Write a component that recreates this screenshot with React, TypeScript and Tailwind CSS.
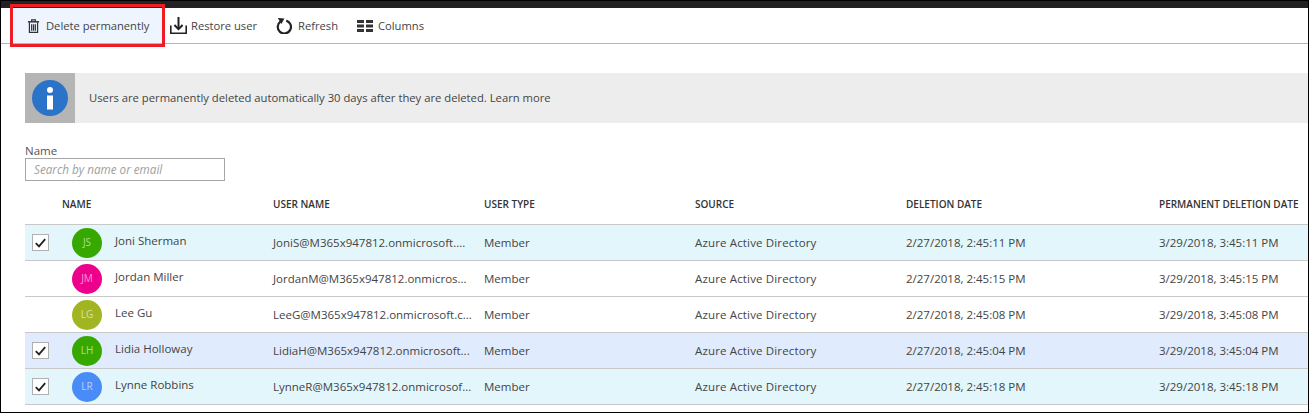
const font = "[font-family:'Open_Sans','Noto_Sans',sans-serif]";

const TrashIcon = () => (
  <svg width="13" height="14" viewBox="0 0 14 15" fill="none" stroke="#333" strokeWidth="1.3">
    <path d="M1 3h12" strokeWidth="1.6" />
    <path d="M5 2.8V1h4v1.8" />
    <path d="M2.6 3.5v10.8h8.8V3.5" />
    <path d="M5 5.5v7M7 5.5v7M9 5.5v7" />
  </svg>
);
const RestoreIcon = () => (
  <svg width="17" height="17" viewBox="0 0 17 17" fill="none" stroke="#222" strokeWidth="1.6">
    <path d="M.8 8.5v7.7h15.4V8.5" />
    <path d="M8.5 0v11.8" strokeWidth="2" />
    <path d="M4.4 8l4.1 4.1L12.6 8" strokeWidth="2" />
  </svg>
);
const RefreshIcon = () => (
  <svg width="16" height="17" viewBox="0 0 16 17" fill="none">
    <path d="M4.4 4.6A6.6 6.6 0 1 0 10.3 3.6" stroke="#222" strokeWidth="2.2" />
    <path d="M1.8 1l6.6.5-3 5.6z" fill="#222" />
  </svg>
);
const ColumnsIcon = () => (
  <svg width="16" height="12" viewBox="0 0 16 12" fill="#333">
    <path d="M0 0h7v3H0zM9 0h7v3H9zM0 4.5h7v3H0zM9 4.5h7v3H9zM0 9h7v3H0zM9 9h7v3H9z" />
  </svg>
);
const Check = () => (
  <svg width="11" height="10" viewBox="0 0 11 10" fill="none" stroke="#222" strokeWidth="1.8">
    <path d="M.8 5.2l3.2 3.2L10.2 1.2" />
  </svg>
);

const rows = [
  { check: true, bg: "bg-[#e3f6fb]", av: "bg-[#36a800]", i: "JS", name: "Joni Sherman", user: "JoniS@M365x947812.onmicrosoft....", del: "2/27/2018, 2:45:11 PM", perm: "3/29/2018, 3:45:11 PM" },
  { check: false, bg: "bg-white", av: "bg-[#ec008c]", i: "JM", name: "Jordan Miller", user: "JordanM@M365x947812.onmicros...", del: "2/27/2018, 2:45:15 PM", perm: "3/29/2018, 3:45:15 PM" },
  { check: false, bg: "bg-white", av: "bg-[#a1b523]", i: "LG", name: "Lee Gu", user: "LeeG@M365x947812.onmicrosoft.c...", del: "2/27/2018, 2:45:08 PM", perm: "3/29/2018, 3:45:08 PM" },
  { check: true, bg: "bg-[#e0ecfd]", av: "bg-[#36a800]", i: "LH", name: "Lidia Holloway", user: "LidiaH@M365x947812.onmicrosoft...", del: "2/27/2018, 2:45:04 PM", perm: "3/29/2018, 3:45:04 PM" },
  { check: true, bg: "bg-[#e3f6fb]", av: "bg-[#4a8cf7]", i: "LR", name: "Lynne Robbins", user: "LynneR@M365x947812.onmicrosof...", del: "2/27/2018, 2:45:18 PM", perm: "3/29/2018, 3:45:18 PM" },
];

const Head = ({ w, children }: { w: string; children: string }) => (
  <div className={`${w} shrink-0 whitespace-nowrap`}>{children}</div>
);

export default function App() {
  return (
    <div className={`${font} h-[413px] w-[1309px] overflow-hidden bg-white border-l border-b border-r-[1px] border-black text-[11.5px] text-[#444]`}>
      <div className="h-2 bg-[#222] border-t border-black" />
      <div className="h-9 border-b border-[#b5b5b5] flex items-stretch pl-[13px] text-[11.2px] text-[#444] relative">
        <div className="relative w-[148px] bg-[#eff5fe] flex items-center pl-[13px] gap-[6px]">
          <TrashIcon />
          <span className="mt-[2px]">Delete permanently</span>
          <div className="absolute left-[-4px] top-[-4px] w-[155px] h-[43px] border-[3px] border-[#ee1c25]" />
        </div>
        <div className="w-[114px] flex items-center pl-2 gap-1"><RestoreIcon /><span className="mt-[2px]">Restore user</span></div>
        <div className="w-[81px] flex items-center gap-[6px]"><RefreshIcon /><span className="mt-[2px]">Refresh</span></div>
        <div className="flex items-center gap-[5px]"><ColumnsIcon /><span className="mt-[2px]">Columns</span></div>
      </div>

      <div className="pl-6">
        <div className="mt-[29px] h-[50px] bg-[#ededed] flex items-center text-[11.25px]">
          <div className="w-[50px] h-[50px] bg-[#b5b5b5] flex items-center justify-center">
            <svg width="36" height="36" viewBox="0 0 36 36">
              <circle cx="18" cy="18" r="18" fill="#2b72c9" />
              <circle cx="18" cy="10" r="3" fill="#fff" />
              <rect x="15" y="15.5" width="6" height="14" fill="#fff" />
            </svg>
          </div>
          <span className="ml-[14px]">Users are permanently deleted automatically 30 days after they are deleted. Learn more</span>
        </div>

        <div className="mt-[20px] leading-[15px] text-[#555]">Name</div>
        <div className="w-[200px] h-[23px] border border-[#a6a6a6] flex items-center pl-2 italic text-[11.7px] text-[#a0a0a0]">Search by name or email</div>

        <div className="h-[43px] flex items-center pt-[3px] text-[10px] font-semibold text-[#333] pl-[37px]">
          <Head w="w-[211px]">NAME</Head>
          <Head w="w-[211px]">USER NAME</Head>
          <Head w="w-[211px]">USER TYPE</Head>
          <Head w="w-[211px]">SOURCE</Head>
          <Head w="w-[253px]">DELETION DATE</Head>
          <Head w="w-[150px]">PERMANENT DELETION DATE</Head>
        </div>

        <div className="border-t border-[#c8c8c8]">
          {rows.map((r) => (
            <div key={r.i} className={`h-9 border-b border-[#c8c8c8] flex items-center ${r.bg}`}>
              <div className="w-[47px] shrink-0 pl-[7px]">
                {r.check && (
                  <div className="w-[17px] h-[17px] bg-white border border-[#b0b0b0] flex items-center justify-center"><Check /></div>
                )}
              </div>
              <div className={`w-[30px] h-[30px] shrink-0 rounded-full ${r.av} flex items-center justify-center text-[10px] text-white/60`}>{r.i}</div>
              <div className="w-[171px] shrink-0 pl-[13px] -mt-1 text-[#444]">{r.name}</div>
              <div className="w-[211px] shrink-0 whitespace-nowrap">{r.user}</div>
              <div className="w-[211px] shrink-0">Member</div>
              <div className="w-[211px] shrink-0 tracking-[0.15px]">Azure Active Directory</div>
              <div className="w-[253px] shrink-0">{r.del}</div>
              <div className="whitespace-nowrap">{r.perm}</div>
            </div>
          ))}
        </div>
      </div>
    </div>
  );
}
